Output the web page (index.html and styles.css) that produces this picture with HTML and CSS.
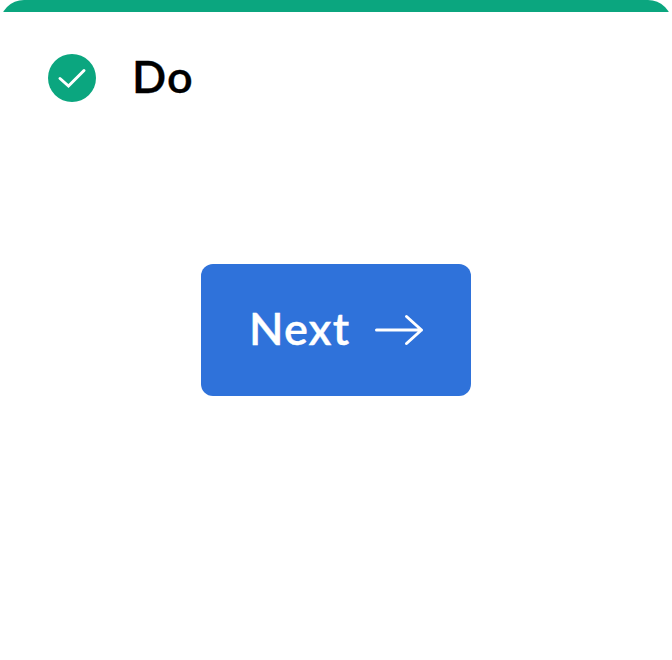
FILE: index.html
```html
<!DOCTYPE html>
<html lang="en">
<head>
<meta charset="utf-8">
<title>Do</title>
<link rel="stylesheet" href="styles.css">
</head>
<body>
<main class="card">
  <header class="card-header">
    <svg class="status" viewBox="0 0 48 48" aria-hidden="true">
      <circle cx="24" cy="24" r="24" fill="#0ba67f"/>
      <path d="M12 24.500l8.500 7.500L36 16.500" fill="none" stroke="#fff" stroke-width="3" stroke-linecap="round"/>
    </svg>
    <h1 class="title">Do</h1>
  </header>
  <section class="card-body">
    <button class="next" type="button">
      <span class="label">Next</span>
      <svg class="arrow" viewBox="0 0 50 32" aria-hidden="true">
        <path d="M2.500 16H47.500M32.500 2.500L47.500 16L32.500 29.500" fill="none" stroke="#fff" stroke-width="3" stroke-linecap="round" stroke-linejoin="round"/>
      </svg>
    </button>
  </section>
</main>
</body>
</html>
```
FILE: styles.css
```css
* {
  box-sizing: border-box;
}

body {
  margin: 0;
  background: #fff;
  font-family: Lato, "Liberation Sans", sans-serif;
}

.card {
  height: 660px;
  overflow: hidden;
  border-radius: 24px 24px 0 0;
  background: linear-gradient(#0ba67f 12px, #fff 12px);
}

.card-header {
  display: flex;
  align-items: center;
  gap: 36px;
  height: 156px;
  padding: 0 48px;
}

.status {
  width: 48px;
  height: 48px;
}

.title,
.label {
  margin: 0;
  padding-bottom: 4px;
  font-size: 45px;
  font-weight: 600;
  line-height: 60px;
  letter-spacing: 1.1px;
  -webkit-text-stroke: 0.35px currentColor;
}

.title {
  padding-bottom: 5px;
  color: #000;
}

.card-body {
  display: flex;
  justify-content: center;
  padding-top: 108px;
}

.next {
  display: flex;
  align-items: center;
  justify-content: space-between;
  width: 270px;
  height: 132px;
  padding: 0 47px 0 48px;
  border: 0;
  border-radius: 12px;
  background: #2f72da;
  color: #fff;
  font: inherit;
}

.arrow {
  width: 50px;
  height: 32px;
}
```
